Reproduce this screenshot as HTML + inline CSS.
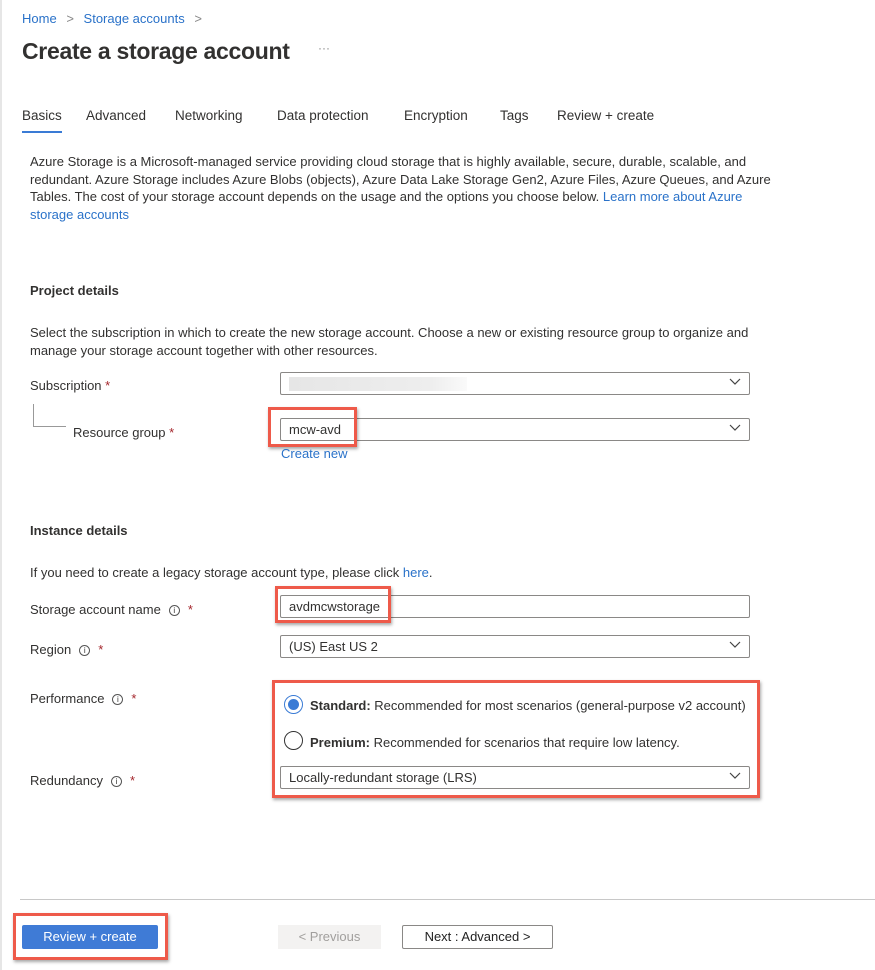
<!DOCTYPE html>
<html><head><meta charset="utf-8"><style>
*{margin:0;padding:0;box-sizing:border-box}
body{width:875px;height:970px;background:#fff;font-family:"Liberation Sans",sans-serif;color:#323130;position:relative;overflow:hidden;font-size:13px;letter-spacing:0}
.a{position:absolute;white-space:nowrap}
.lnk{color:#2a72c9}
.inp{position:absolute;border:1px solid #8a8886;border-radius:2px;background:#fff;height:23px;padding:3px 8px;font-size:13px}
.chev{position:absolute;right:8px;top:5px}
.red{position:absolute;border:3px solid #ee5a4a;box-shadow:1px 2px 3px rgba(0,0,0,.35)}
.star{color:#a4262c}
.info{display:inline-block;width:11px;height:11px;border:1px solid #555;border-radius:50%;font-size:8px;text-align:center;line-height:9px;vertical-align:1px;margin-left:8px;margin-right:8px}
b{font-weight:bold}
</style></head><body>
<div class="a" style="left:0;top:0;width:2px;height:970px;background:#e6e6e6"></div>
<div class="a" style="top:11px;left:22px;font-size:13px"><span class="lnk">Home</span> <span style="color:#888;margin:0 6px">&gt;</span> <span class="lnk">Storage accounts</span> <span style="color:#888;margin-left:6px">&gt;</span></div>
<div class="a" style="top:38px;left:22px;font-size:23px;font-weight:bold;color:#323130;letter-spacing:-0.3px">Create a storage account</div>
<div class="a" style="top:41px;left:318px;color:#888;font-size:12px">···</div>
<div class="a" style="top:108px;left:22px;font-size:13.5px">Basics</div>
<div class="a" style="top:131px;left:22px;width:40px;height:2px;background:#3a7bd5"></div>
<div class="a" style="top:108px;left:86px;font-size:13.5px">Advanced</div>
<div class="a" style="top:108px;left:175px;font-size:13.5px">Networking</div>
<div class="a" style="top:108px;left:277px;font-size:13.5px">Data protection</div>
<div class="a" style="top:108px;left:404px;font-size:13.5px">Encryption</div>
<div class="a" style="top:108px;left:500px;font-size:13.5px">Tags</div>
<div class="a" style="top:108px;left:557px;font-size:13.5px">Review + create</div>

<div class="a" style="top:153px;left:30px;line-height:17.5px">Azure Storage is a Microsoft-managed service providing cloud storage that is highly available, secure, durable, scalable, and<br>redundant. Azure Storage includes Azure Blobs (objects), Azure Data Lake Storage Gen2, Azure Files, Azure Queues, and Azure<br>Tables. The cost of your storage account depends on the usage and the options you choose below. <span class="lnk">Learn more about Azure</span><br><span class="lnk">storage accounts</span></div>

<div class="a" style="top:283px;left:30px;font-weight:bold;font-size:13px">Project details</div>
<div class="a" style="top:324px;left:30px;line-height:17.5px">Select the subscription in which to create the new storage account. Choose a new or existing resource group to organize and<br>manage your storage account together with other resources.</div>
<div class="a" style="top:378px;left:30px">Subscription <span class="star">*</span></div>
<div class="inp" style="left:280px;top:372px;width:470px"><div style="position:absolute;left:8px;top:4px;width:178px;height:14px;background:linear-gradient(90deg,#e6e6e6,#eee 80%,#fafafa)"></div><svg class="chev" width="12" height="8"><path d="M1 1l5 5 5-5" fill="none" stroke="#444" stroke-width="1.2"/></svg></div>
<div class="a" style="left:33px;top:404px;width:1px;height:22px;background:#999"></div>
<div class="a" style="left:33px;top:426px;width:33px;height:1px;background:#999"></div>
<div class="a" style="top:425px;left:73px">Resource group <span class="star">*</span></div>
<div class="inp" style="left:280px;top:418px;width:470px">mcw-avd<svg class="chev" width="12" height="8"><path d="M1 1l5 5 5-5" fill="none" stroke="#444" stroke-width="1.2"/></svg></div>
<div class="red" style="left:268px;top:407px;width:89px;height:40px"></div>
<div class="a lnk" style="top:446px;left:281px">Create new</div>

<div class="a" style="top:523px;left:30px;font-weight:bold;font-size:13px">Instance details</div>
<div class="a" style="top:565px;left:30px">If you need to create a legacy storage account type, please click <span class="lnk">here</span>.</div>
<div class="a" style="top:602px;left:30px">Storage account name<span class="info">i</span><span class="star">*</span></div>
<div class="inp" style="left:280px;top:595px;width:470px">avdmcwstorage</div>
<div class="red" style="left:275px;top:586px;width:116px;height:37px"></div>
<div class="a" style="top:642px;left:30px">Region<span class="info">i</span><span class="star">*</span></div>
<div class="inp" style="left:280px;top:635px;width:470px">(US) East US 2<svg class="chev" width="12" height="8"><path d="M1 1l5 5 5-5" fill="none" stroke="#444" stroke-width="1.2"/></svg></div>
<div class="a" style="top:691px;left:30px">Performance<span class="info">i</span><span class="star">*</span></div>
<div class="a" style="left:284px;top:695px;width:19px;height:19px;border:1px solid #3a7bd5;border-radius:50%"><div style="margin:3px;width:11px;height:11px;border-radius:50%;background:#3a7bd5"></div></div>
<div class="a" style="top:698px;left:310px"><b>Standard:</b> Recommended for most scenarios (general-purpose v2 account)</div>
<div class="a" style="left:284px;top:731px;width:19px;height:19px;border:1px solid #333;border-radius:50%"></div>
<div class="a" style="top:735px;left:310px"><b>Premium:</b> Recommended for scenarios that require low latency.</div>
<div class="a" style="top:773px;left:30px">Redundancy<span class="info">i</span><span class="star">*</span></div>
<div class="inp" style="left:280px;top:766px;width:470px">Locally-redundant storage (LRS)<svg class="chev" width="12" height="8"><path d="M1 1l5 5 5-5" fill="none" stroke="#444" stroke-width="1.2"/></svg></div>
<div class="red" style="left:272px;top:680px;width:488px;height:118px"></div>

<div class="a" style="left:20px;top:899px;width:855px;height:1px;background:#c8c8c8"></div>
<div class="a" style="left:22px;top:925px;width:136px;height:24px;background:#3f7bd6;border-radius:2px;color:#fff;text-align:center;line-height:24px">Review + create</div>
<div class="red" style="left:13px;top:913px;width:155px;height:47px"></div>
<div class="a" style="left:278px;top:925px;width:103px;height:24px;background:#f3f2f1;color:#a19f9d;text-align:center;line-height:24px">&lt; Previous</div>
<div class="a" style="left:402px;top:925px;width:151px;height:24px;border:1px solid #8a8886;border-radius:2px;text-align:center;line-height:22px;color:#222">Next : Advanced &gt;</div>
</body></html>
